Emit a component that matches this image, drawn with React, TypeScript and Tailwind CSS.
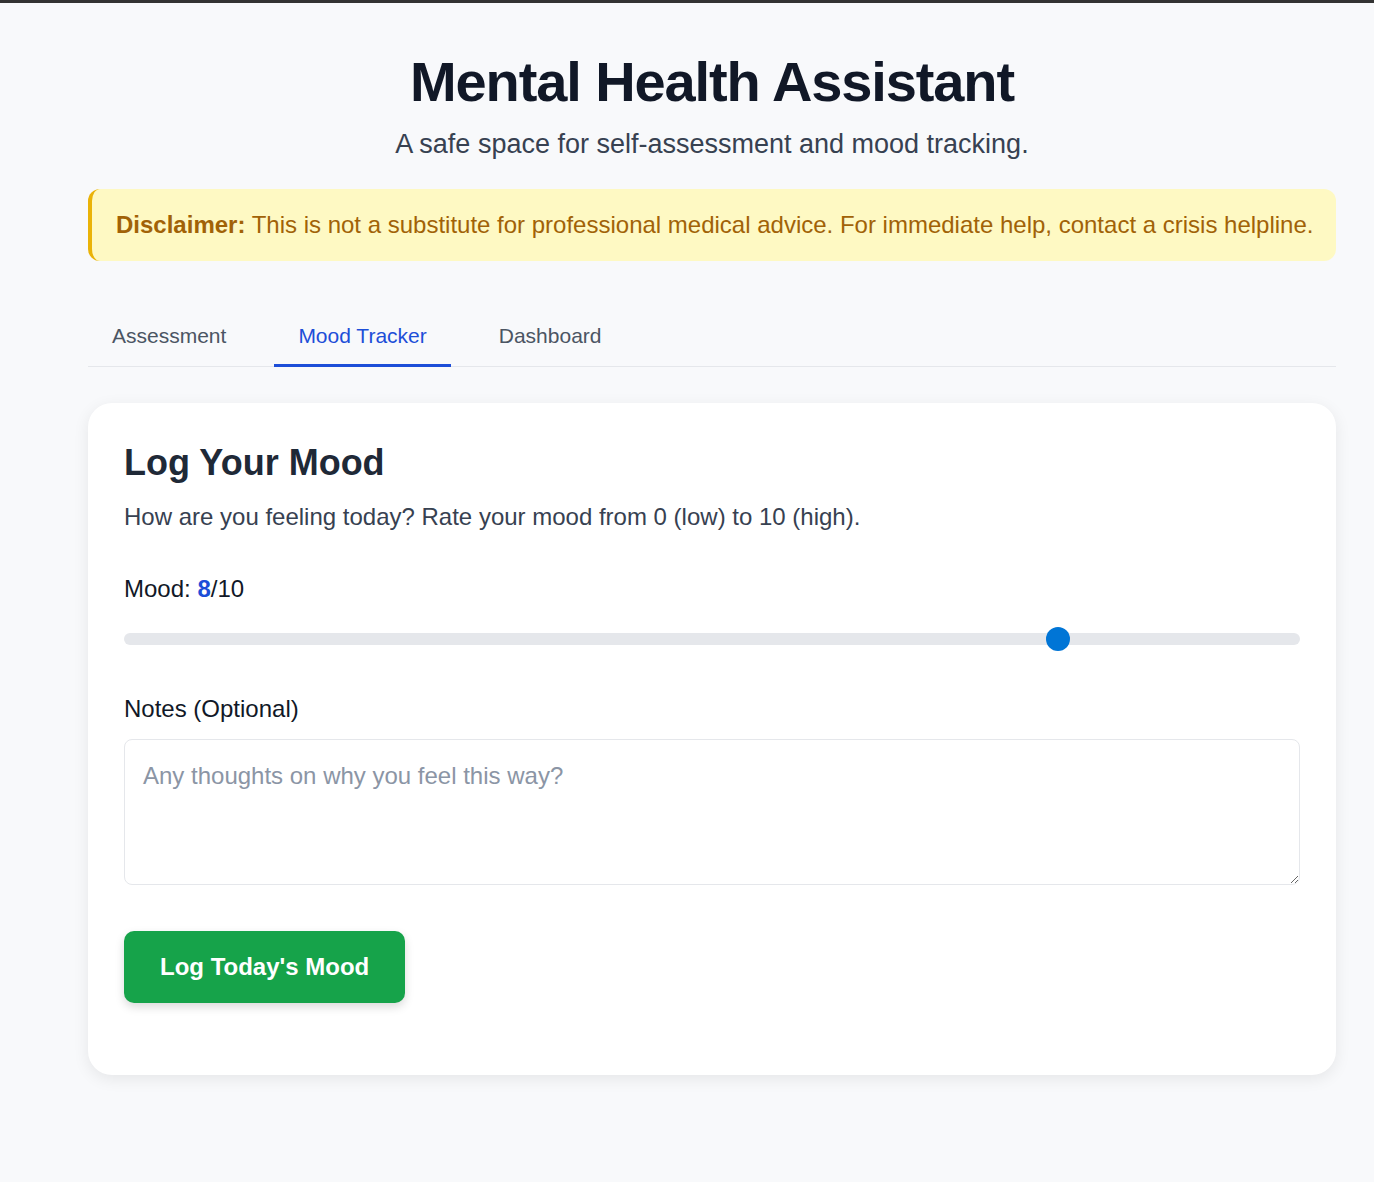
import { useState } from 'react'

const tabs = ['Assessment', 'Mood Tracker', 'Dashboard']

export default function App() {
  const [active, setActive] = useState('Mood Tracker')
  const [mood, setMood] = useState(8)
  const [notes, setNotes] = useState('')

  return (
    <div
      className="min-h-screen bg-[#f8f9fb] border-t-[3px] border-[#333333] text-[#111827]"
      style={{ fontFamily: '"Liberation Sans", Arial, sans-serif' }}
    >
      <div className="ml-[88px] w-[1248px] pt-[45px] pb-[100px]">
        <header className="text-center">
          <h1 className="text-[56px] leading-[1.2] font-bold tracking-[-0.02em] text-[#111827]">
            Mental Health Assistant
          </h1>
          <p className="mt-[9px] text-[27px] leading-[1.5] text-[#374151]">
            A safe space for self-assessment and mood tracking.
          </p>
        </header>

        <div className="mt-[24px] whitespace-nowrap rounded-xl border-l-4 border-[#eab308] bg-[#fef9c3] pl-6 pr-4 py-5 text-[24px] leading-[32px] text-[#a16207]">
          <strong className="font-bold">Disclaimer:</strong> This is not a substitute for professional medical advice.
          For immediate help, contact a crisis helpline.
        </div>

        <nav className="mt-[39px] flex gap-6 border-b border-[#e5e7eb]">
          {tabs.map((t) => (
            <button
              key={t}
              onClick={() => setActive(t)}
              className={
                t === active
                  ? 'px-6 pt-[20px] pb-[13px] text-[21px] leading-[31px] text-[#1d4ed8] border-b-[3px] border-[#1d4ed8] -mb-px'
                  : 'px-6 pt-[20px] pb-[13px] text-[21px] leading-[31px] text-[#4b5563] border-b-[3px] border-transparent -mb-px'
              }
            >
              {t}
            </button>
          ))}
        </nav>

        <section className="mt-[36px] rounded-[24px] bg-white px-9 pt-[38px] pb-[72px] shadow-[0_4px_16px_rgba(0,0,0,0.08)]">
          <h2 className="text-[36px] leading-[1.2] font-bold text-[#1f2937]">Log Your Mood</h2>
          <p className="mt-[15px] text-[24px] leading-[1.5] text-[#374151]">
            How are you feeling today? Rate your mood from 0 (low) to 10 (high).
          </p>

          <label className="mt-[36px] block text-[24px] leading-[1.5] text-[#111827]">
            Mood: <span className="font-bold text-[#1d4ed8]">{mood}</span>/10
          </label>
          <input
            type="range"
            min={0}
            max={10}
            value={mood}
            onChange={(e) => setMood(Number(e.target.value))}
            className="mt-[26px] block h-3 w-full cursor-pointer appearance-none rounded-full bg-[#e5e7eb] [&::-webkit-slider-thumb]:h-6 [&::-webkit-slider-thumb]:w-6 [&::-webkit-slider-thumb]:appearance-none [&::-webkit-slider-thumb]:rounded-full [&::-webkit-slider-thumb]:bg-[#0075d6]"
          />

          <label className="mt-[46px] block text-[24px] leading-[1.5] text-[#111827]">Notes (Optional)</label>
          <textarea
            value={notes}
            onChange={(e) => setNotes(e.target.value)}
            placeholder="Any thoughts on why you feel this way?"
            className="mt-[12px] block h-[146px] w-full rounded-lg border border-[#e5e7eb] px-[18px] py-[18px] text-[24px] leading-[1.5] text-[#111827] placeholder:text-[#8b95a5] outline-none"
          />

          <button className="mt-[46px] h-[72px] rounded-[10px] bg-[#16a34a] px-9 text-[24px] font-bold text-white shadow-[0_4px_10px_rgba(0,0,0,0.15)]">
            Log Today's Mood
          </button>
        </section>
      </div>
    </div>
  )
}
